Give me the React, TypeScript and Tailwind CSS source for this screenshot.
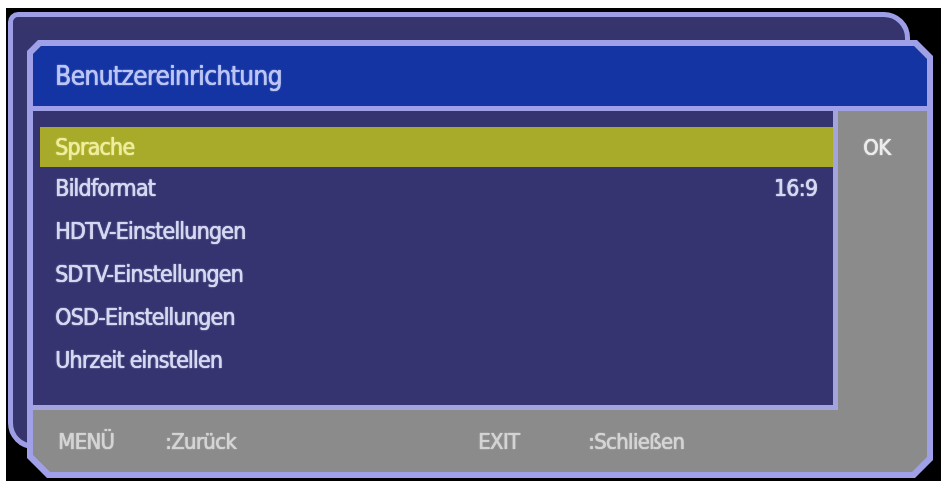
const items = [
  { label: 'Sprache', active: true },
  { label: 'Bildformat', value: '16:9' },
  { label: 'HDTV-Einstellungen' },
  { label: 'SDTV-Einstellungen' },
  { label: 'OSD-Einstellungen' },
  { label: 'Uhrzeit einstellen' },
]

// soft, slightly heavy glyphs like a captured TV picture
const glow = '[text-shadow:0.5px_0_0_currentColor,0_0_1.5px_currentColor]'

export default function App() {
  return (
    <div className="w-[945px] h-[484px] bg-white pt-[8px] pl-[6px] font-['DejaVu_Sans_Condensed','Liberation_Sans_Narrow',sans-serif]">
      <div className="relative w-[935px] h-[473px] bg-black overflow-hidden blur-[0.4px]">
        {/* back window */}
        <div className="absolute left-[2px] top-[4px] w-[902px] h-[437px] bg-[#35346c] border-[5px] border-[#9e9ee6] rounded-tl-[10px] rounded-tr-[26px] rounded-bl-[26px]" />

        {/* front window */}
        <div className="relative ml-[21px] mt-[32px] w-[906px] h-[438px] bg-[#a0a0e8] p-[6px] [clip-path:polygon(11px_0,calc(100%_-_16px)_0,100%_16px,100%_calc(100%_-_18px),calc(100%_-_18px)_100%,20px_100%,0_calc(100%_-_20px),0_11px)]">
          <div className="h-full flex flex-col bg-[#8b8b8b] [clip-path:polygon(8px_0,calc(100%_-_13px)_0,100%_13px,100%_calc(100%_-_15px),calc(100%_-_15px)_100%,17px_100%,0_calc(100%_-_17px),0_8px)]">
            <div className="h-[65px] shrink-0 flex items-center pl-[22px] bg-[#1434a4] border-b-[5px] border-[#a0a0e8]">
              <span className={`text-[26px] tracking-[-0.6px] text-[#bcc6f4] ${glow}`}>Benutzereinrichtung</span>
            </div>

            <div className="flex h-[299px] shrink-0">
              <div className="w-[805px] bg-[#353470] border-r-[5px] border-b-[5px] border-[#a4a4dc] pt-[16px] pl-[7px]">
                {items.map((item) => (
                  <div
                    key={item.label}
                    className={
                      item.active
                        ? 'h-[40px] flex items-center justify-between pl-[15px] pr-[16px] bg-[#a8aa2a] text-[#eeee9c]'
                        : 'h-[43px] flex items-center justify-between pl-[15px] pr-[16px] text-[#d6d8f2]'
                    }
                  >
                    <span className={`text-[23px] tracking-[-0.8px] ${glow}`}>{item.label}</span>
                    {item.value && <span className={`text-[23px] tracking-[-0.8px] ${glow}`}>{item.value}</span>}
                  </div>
                ))}
              </div>
              <div className="flex-1 pt-[16px]">
                <div className={`h-[40px] flex items-center pl-[25px] text-[22px] tracking-[-0.5px] text-[#ececec] ${glow}`}>OK</div>
              </div>
            </div>

            <div className={`flex-1 flex items-center pl-[25px] text-[22px] tracking-[-0.7px] text-[#d4d4d4] ${glow}`}>
              <span className="w-[107px]">MENÜ</span>
              <span className="w-[313px]">:Zurück</span>
              <span className="w-[110px]">EXIT</span>
              <span>:Schließen</span>
            </div>
          </div>
        </div>
      </div>
    </div>
  )
}
